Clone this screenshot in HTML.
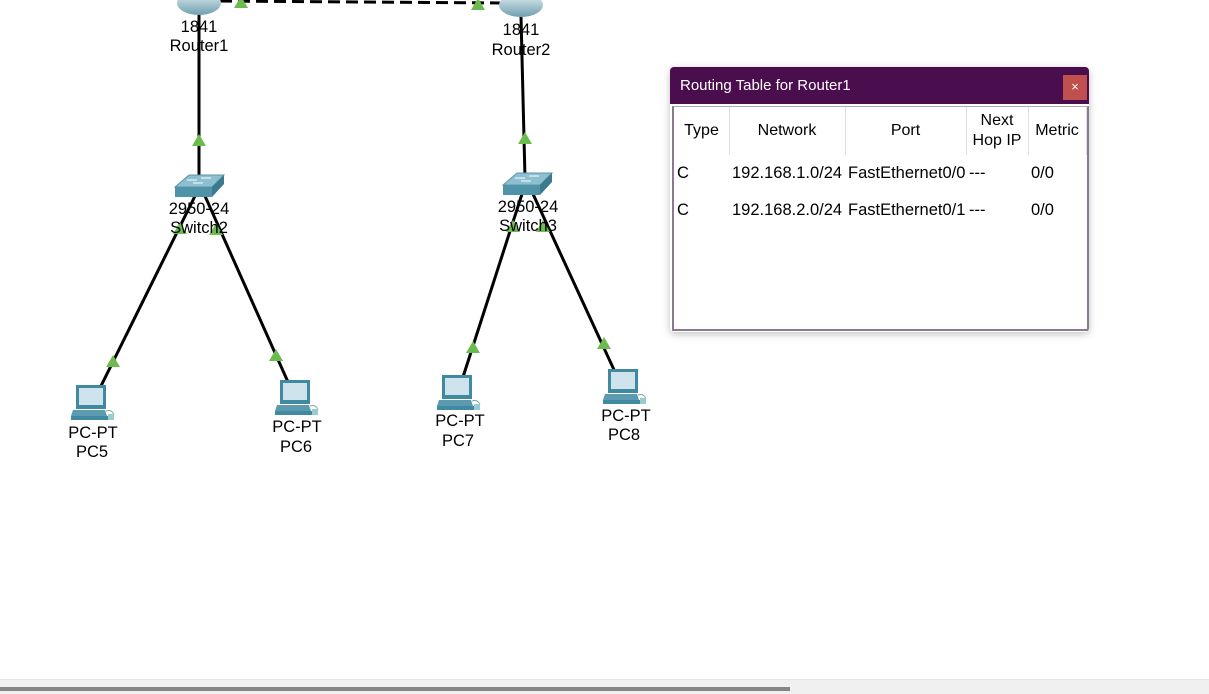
<!DOCTYPE html>
<html><head><meta charset="utf-8"><style>
body{margin:0;width:1209px;height:693px;background:#fff;overflow:hidden;position:relative;font-family:"Liberation Sans",Arial,sans-serif}
svg{position:absolute;left:0;top:0}
.lbl{font-size:16.5px;fill:#000;text-anchor:middle;font-family:"Liberation Sans",Arial,sans-serif}
#dlg{position:absolute;left:670px;top:67px;width:419px;height:265px;background:#fff;border-radius:4px;box-shadow:0 2px 8px rgba(0,0,0,.25);overflow:hidden}
#tb{height:37px;background:#4a0e4e;color:#fff;font-size:15px;line-height:38px;padding-left:10px;position:relative}
#cl{position:absolute;left:393px;top:8px;width:24px;height:25px;background:#c0504d;color:#fff;font-size:13px;line-height:24px;text-align:center}
#ct{position:absolute;left:2px;top:39px;width:413px;height:222px;border:1px solid #aaa;border-bottom:2px solid #8a7a8e;border-left:2px solid #8a7a8e;border-right:2px solid #8a7a8e}
.c{position:absolute;font-size:16.5px;color:#000;white-space:nowrap}
.h{position:absolute;top:0;height:48px;border-right:1px solid #e0e0e0;font-size:16px;display:flex;align-items:center;justify-content:center;text-align:center;line-height:20px}
#sb{position:absolute;left:0;top:679px;width:1209px;height:14px;background:#f0f0f0;border-top:1px solid #e4e4e4}
#th{position:absolute;left:0;top:7px;width:790px;height:4px;background:#858585}
</style></head><body>
<svg width="1209" height="693">
<defs>
<linearGradient id="rg" x1="0" x2="0" y1="0" y2="1"><stop offset="0" stop-color="#e6f1f4"/><stop offset="1" stop-color="#6f9faf"/></linearGradient>
<g id="sw">
<polygon points="-24,0 -10,-12 25,-12 13,0" fill="#8cbfcf" stroke="#5f95a8"/>
<polygon points="-24,0 13,0 13,10 -24,10" fill="#4f93a8"/>
<polygon points="13,0 25,-12 25,-3 13,10" fill="#3c7a8e"/>
<path d="M-12,-7h10M2,-9h10M-6,-4h10" stroke="#fff" stroke-width="1"/>
</g>
<g id="pc">
<rect x="-15" y="0" width="30" height="24" fill="#3f8aa0"/>
<rect x="-12" y="3" width="24" height="17" fill="#cfe3ec"/>
<polygon points="-18,25 14,25 16,31 -20,31" fill="#5c9ab0"/>
<rect x="-20" y="31" width="38" height="4" fill="#3f8aa0"/>
<path d="M15,26 q6,-2 8,4" stroke="#7aa" fill="none"/>
<rect x="17" y="29" width="6" height="6" fill="#9cc"/>
</g>
<polygon id="tr" points="-7,6 7,6 0,-6" fill="#6cbb4e"/>
</defs>
<path d="M220,1 L500,3" stroke="#000" stroke-width="3" stroke-dasharray="12,6"/>
<ellipse cx="199" cy="3" rx="22" ry="12" fill="url(#rg)"/>
<ellipse cx="521" cy="5" rx="22" ry="12" fill="url(#rg)"/>
<line x1="199" y1="15" x2="199" y2="180" stroke="#000" stroke-width="3"/>
<line x1="521" y1="17" x2="525" y2="178" stroke="#000" stroke-width="3"/>
<line x1="195" y1="196" x2="100" y2="388" stroke="#000" stroke-width="3"/>
<line x1="205" y1="196" x2="288" y2="382" stroke="#000" stroke-width="3"/>
<line x1="522" y1="194" x2="463" y2="377" stroke="#000" stroke-width="3"/>
<line x1="533" y1="194" x2="615" y2="372" stroke="#000" stroke-width="3"/>
<use href="#sw" x="199" y="187"/>
<use href="#sw" x="527" y="185"/>
<use href="#tr" x="241" y="2"/><use href="#tr" x="478" y="4"/>
<use href="#tr" x="199" y="140"/><use href="#tr" x="525" y="138"/>
<use href="#tr" x="113" y="361"/><use href="#tr" x="276" y="355"/>
<use href="#tr" x="473" y="347"/><use href="#tr" x="604" y="343"/>
<use href="#tr" x="180" y="228"/><use href="#tr" x="216" y="229"/>
<use href="#tr" x="513" y="226"/><use href="#tr" x="543" y="226"/>
<use href="#pc" x="91" y="385"/><use href="#pc" x="295" y="380"/>
<use href="#pc" x="457" y="375"/><use href="#pc" x="623" y="369"/>
<text class="lbl" x="199" y="32">1841</text><text class="lbl" x="199" y="51">Router1</text>
<text class="lbl" x="521" y="35">1841</text><text class="lbl" x="521" y="55">Router2</text>
<text class="lbl" x="199" y="214">2950-24</text><text class="lbl" x="199" y="233">Switch2</text>
<text class="lbl" x="528" y="212">2950-24</text><text class="lbl" x="528" y="231">Switch3</text>
<text class="lbl" x="93" y="438">PC-PT</text><text class="lbl" x="92" y="457">PC5</text>
<text class="lbl" x="297" y="432">PC-PT</text><text class="lbl" x="296" y="452">PC6</text>
<text class="lbl" x="460" y="426">PC-PT</text><text class="lbl" x="458" y="446">PC7</text>
<text class="lbl" x="626" y="421">PC-PT</text><text class="lbl" x="624" y="440">PC8</text>
</svg>
<div id="dlg"><div id="tb">Routing Table for Router1<div id="cl">×</div></div>
<div id="ct">
<div class="h" style="left:0;width:55px">Type</div>
<div class="h" style="left:55px;width:116px">Network</div>
<div class="h" style="left:171px;width:121px">Port</div>
<div class="h" style="left:292px;width:62px">Next<br>Hop IP</div>
<div class="h" style="left:354px;width:58px">Metric</div>
<div class="c" style="left:3px;top:57px">C</div><div class="c" style="left:58px;top:57px">192.168.1.0/24</div><div class="c" style="left:174px;top:57px">FastEthernet0/0</div><div class="c" style="left:295px;top:57px">---</div><div class="c" style="left:357px;top:57px">0/0</div>
<div class="c" style="left:3px;top:94px">C</div><div class="c" style="left:58px;top:94px">192.168.2.0/24</div><div class="c" style="left:174px;top:94px">FastEthernet0/1</div><div class="c" style="left:295px;top:94px">---</div><div class="c" style="left:357px;top:94px">0/0</div>
</div></div>
<div id="sb"><div id="th"></div></div>
</body></html>
